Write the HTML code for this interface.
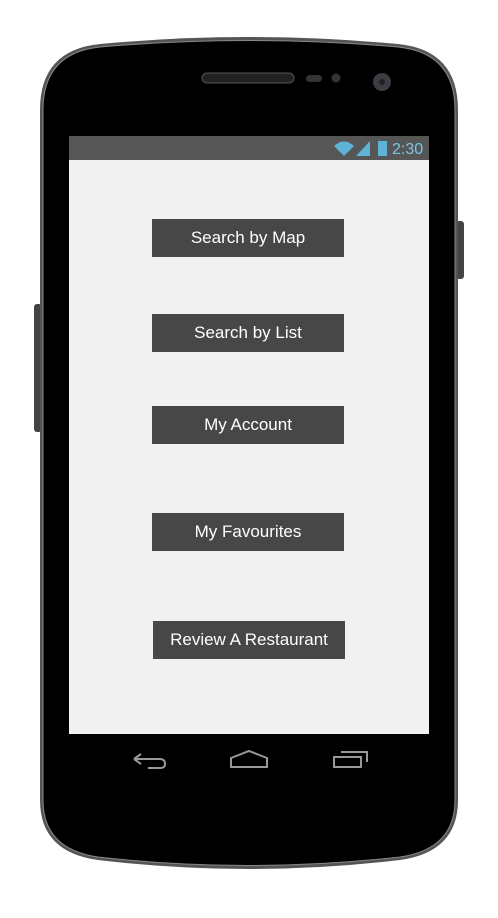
<!DOCTYPE html>
<html><head><style>
html,body{margin:0;padding:0;background:#fff;width:498px;height:918px;overflow:hidden;position:relative;font-family:"Liberation Sans",sans-serif}
.btn{position:absolute;left:152px;width:192px;height:38px;background:#474747;color:#fff;font-size:17px;line-height:38px;text-align:center}
</style></head><body>
<svg width="498" height="918" style="position:absolute;left:0;top:0">
<rect x="34" y="304" width="8" height="128" rx="3" fill="#444"/>
<rect x="456" y="221" width="8" height="58" rx="3" fill="#444"/>
<path d="M40 110 Q40 50 100 44 Q249 30 398 44 Q458 50 458 110 L458 800 Q458 852 400 860 Q249 878 98 860 Q40 852 40 800 Z" fill="#555"/>
<path d="M43 110 Q43 53 100 47 Q249 34 398 47 Q455 53 455 110 L455 800 Q455 849 400 857 Q249 874 98 857 Q43 849 43 800 Z" fill="#000" stroke="#888" stroke-width="1"/>
<rect x="202" y="73" width="92" height="10" rx="5" fill="#222" stroke="#555"/>
<rect x="306" y="75" width="16" height="7" rx="3.5" fill="#333"/>
<circle cx="336" cy="78" r="4.5" fill="#333"/>
<circle cx="382" cy="82" r="9" fill="#3a3d42"/>
<circle cx="382" cy="82" r="3" fill="#222"/>
<rect x="69" y="136" width="360" height="24" fill="#565656"/>
<rect x="69" y="160" width="360" height="574" fill="#f1f1f1"/>
<path d="M334 146 Q344 137 354 146 L344 156 Z" fill="#5fb3d6"/>
<path d="M356 156 L370 141 L370 156 Z" fill="#5fb3d6"/>
<rect x="378" y="141" width="9" height="15" fill="#5fb3d6"/>
<text x="392" y="154" font-family="Liberation Sans" font-size="16" fill="#7cc6e3">2:30</text>
<g fill="none" stroke="#999" stroke-width="2">
<path d="M134 759 L141 754 M134 759 L141 764 M134 759 L160 759 Q165 759 165 764 Q165 768 160 768 L148 768"/>
<path d="M231 767 L231 758 L249 751 L267 758 L267 767 Z"/>
<path d="M334 767 L334 757 L361 757 L361 767 Z M341 752 L367 752 L367 762"/>
</g>
</svg>
<div class="btn" style="top:219px">Search by Map</div>
<div class="btn" style="top:314px">Search by List</div>
<div class="btn" style="top:406px">My Account</div>
<div class="btn" style="top:513px">My Favourites</div>
<div class="btn" style="top:621px;left:153px">Review A Restaurant</div>
</body></html>
